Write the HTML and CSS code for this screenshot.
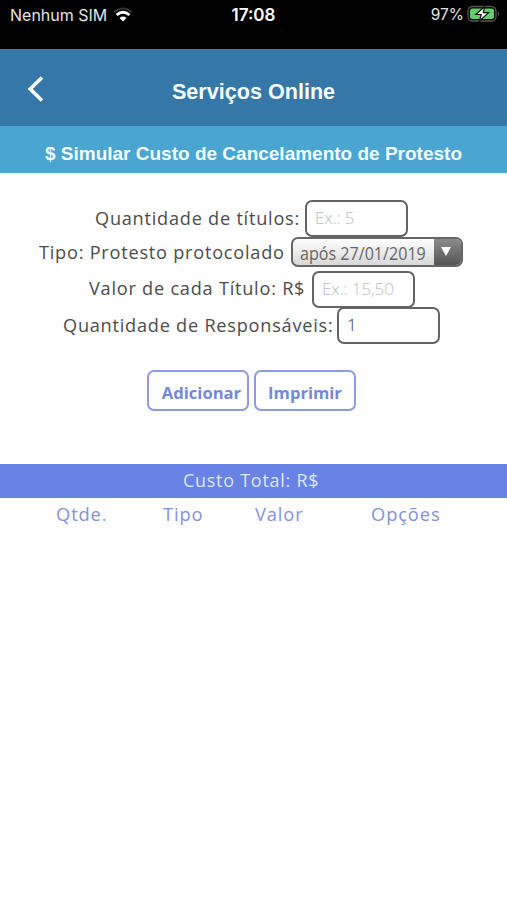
FILE: index.html
```html
<!DOCTYPE html>
<html lang="pt-BR">
<head>
<meta charset="utf-8">
<meta name="viewport" content="width=device-width, initial-scale=1">
<title>Serviços Online</title>
<link rel="stylesheet" href="styles.css">
</head>
<body>
<div class="status">
  <div class="carrier"><span>Nenhum SIM</span>
    <svg class="wifi" width="20" height="15" viewBox="0 0 20 15"><path d="M1.2 5.2Q10-2.2 18.8 5.2" fill="none" stroke="#333" stroke-width="2"/><path d="M3.6 8Q10 2.4 16.4 8" fill="none" stroke="#fff" stroke-width="2.8"/><path d="M6.5 10.9Q10 8 13.5 10.9L10 14.4Z" fill="#fff"/></svg>
  </div>
  <div class="clock">17:08</div>
  <div class="power"><span>97%</span>
    <svg width="34" height="18" viewBox="0 0 34 18"><rect x="1" y="1.5" width="28" height="14.5" rx="4.5" fill="none" stroke="#555" stroke-width="1.3"/><rect x="3" y="3.5" width="24" height="10.5" rx="2.5" fill="#62cf69"/><path d="M31 6.3q2 2.4 0 4.8z" fill="#666"/><path d="M17.8 1.5L8.8 9.5h5.5l-2 6.5 9.4-8.3h-5.4z" fill="#fff" stroke="#111" stroke-width="1.2"/></svg>
  </div>
</div>
<header class="navbar">
  <svg class="back" width="18" height="28" viewBox="0 0 18 28"><path d="M16 2.5L4.2 14 16 25.5" fill="none" stroke="#fff" stroke-width="3.6"/></svg>
  <h1>Serviços Online</h1>
</header>
<div class="subtitle"><h2>$ Simular Custo de Cancelamento de Protesto</h2></div>
<main>
  <form>
    <div class="row qty"><label for="q">Quantidade de títulos:</label><input id="q" placeholder="Ex.: 5"></div>
    <div class="row type"><label>Tipo: Protesto protocolado</label>
      <div class="select"><span>após 27/01/2019</span><i><svg width="10" height="9" viewBox="0 0 10 9"><path d="M0 0h10L5 9z" fill="#fff"/></svg></i></div></div>
    <div class="row value"><label for="v">Valor de cada Título: R$</label><input id="v" placeholder="Ex.: 15,50"></div>
    <div class="row resp"><label for="r">Quantidade de Responsáveis:</label><input id="r" value="1"></div>
    <div class="actions"><button type="button" class="add">Adicionar</button><button type="button">Imprimir</button></div>
  </form>
  <section>
    <div class="total"><span>Custo Total: R$</span></div>
    <div class="columns"><span>Qtde.</span><span>Tipo</span><span>Valor</span><span>Opções</span></div>
  </section>
</main>
</body>
</html>
```
FILE: styles.css
```css
* { box-sizing: border-box; }
body { margin: 0; width: 507px; height: 900px; overflow: hidden; background: #fefefe; font-family: "Open Sans", "Noto Sans", sans-serif; color: #4c4c4c; }
.status { height: 49px; background: #000; color: #e4e4e4; display: grid; grid-template-columns: 1fr 60px 1fr; align-items: start; padding: 5px 8px 0 10px; font: 17px/20px Inter, sans-serif; }
.carrier { display: flex; gap: 6px; white-space: nowrap; font-size: 16px; }
.wifi { margin-top: 2px; }
.clock { font-weight: 600; color: #fff; text-align: center; margin-left: -2px; }
.power { display: flex; justify-content: flex-end; gap: 3px; font-size: 15.5px; margin-right: -2px; }
.navbar { height: 77px; background: #3577a6; display: grid; grid-template-columns: 60px 1fr 60px; color: #f5fdff; border-top: 1px solid #49799b; }
.back { margin: 25px 0 0 26px; }
h1 { margin: 29px 0 0; text-align: center; font: bold 21.6px/26px "Liberation Sans", sans-serif; }
.subtitle { height: 47px; background: #4aa6d0; color: #f3fcff; }
h2 { margin: 0; padding-top: 16px; text-align: center; font: bold 19px/24px "Liberation Sans", sans-serif; }
form { height: 291px; padding-top: 27px; }
.row { display: flex; align-items: center; height: 37px; font-size: 19px; letter-spacing: .8px; white-space: nowrap; }
.row label { line-height: 26px; flex: none; margin-top: -2px; transform: scaleX(.955); transform-origin: left; }
.qty { padding-left: 95px; }
.qty label { width: 210px; }
.type { padding-left: 39px; height: 30px; }
.type label { width: 252px; margin-top: 0; }
.value { padding-left: 89px; height: 38px; margin-top: 3px; }
.value label { width: 223px; }
.resp { padding-left: 63px; margin-top: -1px; }
.resp label { width: 274px; }
input { width: 103px; height: 37px; border: 2px solid #646464; border-radius: 7px; background: #fff; padding: 0 7px 2px 8px; font: 300 17px "Open Sans", sans-serif; letter-spacing: -.1px; color: #333; outline: 0; }
input::placeholder { color: #bbb; opacity: 1; }
.select { width: 172px; height: 30px; border: 2px solid #666; border-radius: 7px; display: flex; overflow: hidden; background: linear-gradient(#fff, #d8d8d8); font-size: 17.5px; letter-spacing: 0; color: #666; }
.select span { width: 141px; margin-left: 7px; line-height: 29px; margin-right: -7px; transform: scaleX(.92); transform-origin: left; }
.select i { flex: 1; background: linear-gradient(#8b8b8b, #555); display: flex; padding: 8px 0 0 7px; }
.actions { display: flex; gap: 5px; margin: 26px 0 0 147px; }
button { width: 102px; height: 41px; padding: 3px 0 0; border: 2px solid #8f9cdb; border-radius: 7px; background: #fff; color: #7488da; font: bold 16.6px "Open Sans", sans-serif; white-space: nowrap; }
.add { padding-left: 7px; }
.total { height: 34px; background: #6882e6; color: #dce7ff; font-size: 19px; letter-spacing: .8px; line-height: 32px; padding-left: 183px; }
.total span, .columns span { display: block; transform: scaleX(.944); transform-origin: left; }
.columns { display: grid; grid-template-columns: 107px 92px 116px 1fr; padding-left: 56px; color: #8592d5; font-size: 19px; letter-spacing: .9px; line-height: 32px; }
.columns span { transform: scaleX(.965); }
```
